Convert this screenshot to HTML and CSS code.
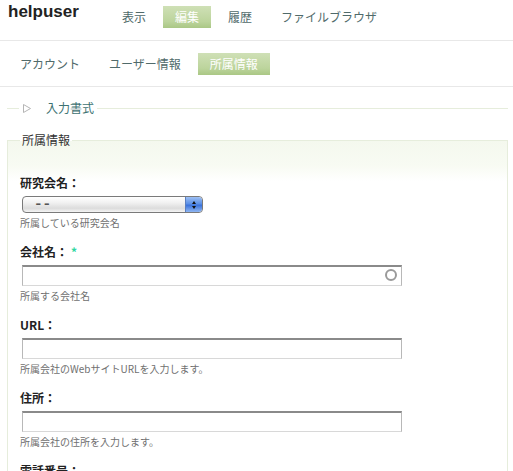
FILE: index.html
```html
<!DOCTYPE html>
<html lang="ja">
<head>
<meta charset="utf-8">
<title>helpuser</title>
<link rel="stylesheet" href="styles.css">
</head>
<body>
<header class="header">
  <h1 class="site-title">helpuser</h1>
  <ul class="tabs primary">
    <li class="tab">表示</li>
    <li class="tab active">編集</li>
    <li class="tab">履歴</li>
    <li class="tab">ファイルブラウザ</li>
  </ul>
</header>
<nav class="subnav">
  <ul class="tabs secondary">
    <li class="tab">アカウント</li>
    <li class="tab">ユーザー情報</li>
    <li class="tab active">所属情報</li>
  </ul>
</nav>
<main class="content">
  <fieldset class="fs collapsed">
    <legend class="fs-legend collapsible"><svg class="tri" width="8" height="9" viewBox="0 0 8 9"><polygon points="0.5,0.5 7.5,4.5 0.5,8.5" fill="none" stroke="#b5b5b5" stroke-width="1"/></svg><span class="legend-link">入力書式</span></legend>
  </fieldset>
  <fieldset class="fs group">
    <legend class="fs-legend">所属情報</legend>
    <div class="form-item">
      <label class="label">研究会名：</label>
      <div class="select"><span class="select-text">--</span><span class="select-btn"><span class="arr up"></span><span class="arr down"></span></span></div>
      <div class="desc">所属している研究会名</div>
    </div>
    <div class="form-item">
      <label class="label">会社名：<span class="req">*</span></label>
      <div class="input"><span class="ac"></span></div>
      <div class="desc">所属する会社名</div>
    </div>
    <div class="form-item">
      <label class="label">URL：</label>
      <div class="input"></div>
      <div class="desc">所属会社のWebサイトURLを入力します。</div>
    </div>
    <div class="form-item">
      <label class="label">住所：</label>
      <div class="input"></div>
      <div class="desc">所属会社の住所を入力します。</div>
    </div>
    <div class="form-item">
      <label class="label">電話番号：</label>
      <div class="input"></div>
      <div class="desc">所属会社の電話番号を入力します。</div>
    </div>
  </fieldset>
</main>
</body>
</html>
```
FILE: styles.css
```css
html, body {
  margin: 0;
  padding: 0;
  background: #fff;
}
body {
  font-family: "Noto Sans CJK JP", "Liberation Sans", sans-serif;
  font-size: 12px;
  color: #333;
  width: 513px;
  overflow: hidden;
}
.header {
  display: flex;
  align-items: flex-start;
  height: 40px;
  border-bottom: 1px solid #e8e8e8;
}
.site-title {
  margin: 2px 0 0 8px;
  font-family: "Liberation Sans", Arial, sans-serif;
  font-weight: bold;
  font-size: 17px;
  line-height: 20px;
  color: #222;
  width: 102px;
}
.tabs {
  display: flex;
  list-style: none;
  margin: 0;
  padding: 0;
}
.tabs.primary {
  margin-top: 6px;
}
.tab {
  padding: 0 12px;
  height: 22px;
  line-height: 22px;
  margin-right: 5px;
  color: #506a6a;
  white-space: nowrap;
}
.tab.active {
  color: #fff;
  background: linear-gradient(#cfe0b6, #bcd49c 70%, #aac785);
}
.subnav {
  height: 45px;
  border-bottom: 1px solid #e8e8e8;
}
.tabs.secondary {
  padding: 12px 0 0 8px;
}
.content {
  padding: 13px 5px 0 7px;
}
.fs {
  margin: 0;
  border: 1px solid #e6eddc;
  padding: 0 12px;
  min-width: 0;
}
.fs-legend {
  padding: 0 2px;
  line-height: 16px;
  height: 16px;
}
.fs.collapsed {
  border-width: 1px 0 0 0;
  padding-bottom: 0;
  height: 8px;
}
.collapsible {
  display: flex;
  align-items: center;
  padding: 0 3px 0 4px;
  margin-left: 0;
}
.tri {
  display: block;
  margin-right: 15px;
}
.legend-link {
  color: #3d7272;
}
.fs.group {
  margin-top: 16px;
  background: linear-gradient(#f4f8ee, #f8fbf3 25px, #fff 40px);
  padding-top: 27px;
  height: 380px;
}
.group > .fs-legend {
  color: #333;
}
.form-item {
  margin-bottom: 14px;
}
.label {
  display: block;
  font-weight: bold;
  line-height: 16px;
  height: 16px;
  color: #222;
}
.req {
  color: #2fd6a0;
  margin-left: 3px;
}
.select {
  margin: 5px 0 0 2px;
  width: 181px;
  height: 17px;
  box-sizing: border-box;
  border: 1px solid #7a7a7a;
  border-radius: 4px;
  background: linear-gradient(#ffffff, #f0f0f0 40%, #dcdcdc 75%, #f4f4f4);
  display: flex;
  justify-content: space-between;
  overflow: hidden;
}
.select-text {
  font-family: "Liberation Sans", sans-serif;
  font-weight: bold;
  font-size: 12px;
  line-height: 15px;
  padding-left: 9px;
  color: #555;
  letter-spacing: 2px;
  transform: scaleX(1.4);
  transform-origin: left center;
}
.select-btn {
  width: 16px;
  height: 15px;
  background: linear-gradient(#9ec0f4, #5b8fe6 45%, #3b73db 55%, #8fb6f2);
  border-left: 1px solid #5a7fc0;
  border-radius: 0 3px 3px 0;
  display: flex;
  flex-direction: column;
  align-items: center;
  justify-content: center;
  gap: 2px;
}
.arr {
  width: 0;
  height: 0;
  border-left: 2.5px solid transparent;
  border-right: 2.5px solid transparent;
}
.arr.up {
  border-bottom: 3px solid #111;
}
.arr.down {
  border-top: 3px solid #111;
}
.input {
  position: relative;
  margin: 5px 0 0 2px;
  width: 380px;
  height: 21px;
  box-sizing: border-box;
  border-top: 2px solid #8a8a8a;
  border-left: 1px solid #b8b8b8;
  border-right: 1px solid #b8b8b8;
  border-bottom: 1px solid #d8d8d8;
  background: #fff;
}
.ac {
  position: absolute;
  right: 4px;
  top: 2px;
  width: 8px;
  height: 8px;
  border: 2px solid #9a9a9a;
  border-radius: 50%;
}
.desc {
  margin-top: 3px;
  font-size: 10px;
  line-height: 14px;
  height: 14px;
  color: #707070;
}
```
